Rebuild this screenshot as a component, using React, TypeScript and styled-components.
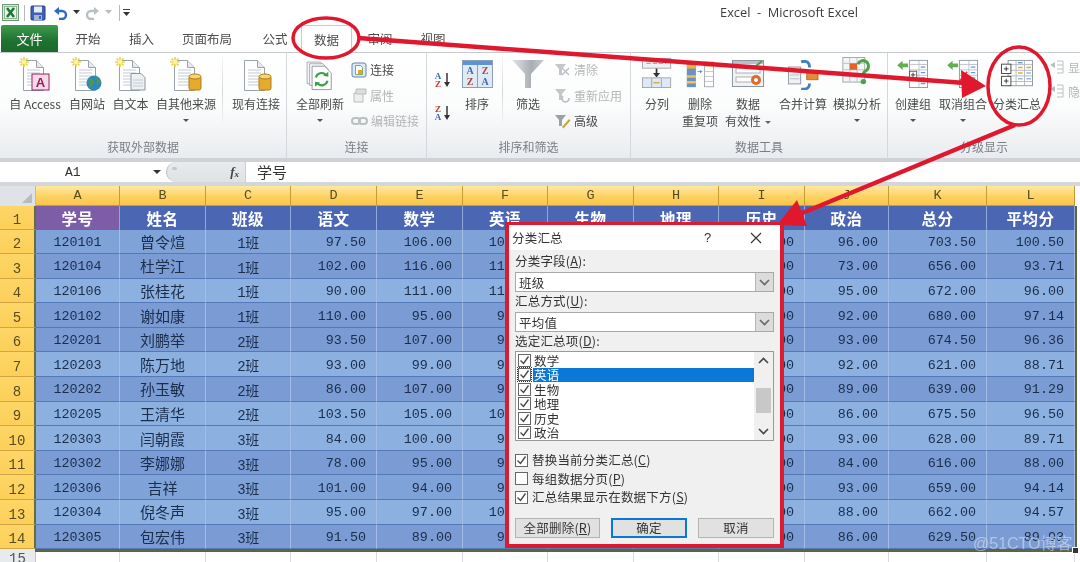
import React from 'react';
import styled, { createGlobalStyle } from 'styled-components';

const CJK = '"Noto Sans CJK SC", "Noto Sans", sans-serif';
const MONO = '"Liberation Mono", "DejaVu Sans Mono", "Noto Sans CJK SC", monospace';

const Global = createGlobalStyle`
  html, body { margin: 0; padding: 0; background: #fff; }
  #root { width: 1080px; height: 562px; overflow: hidden; }
`;

const Page = styled.div`
  position: relative; width: 1080px; height: 562px; overflow: hidden;
  background: #fff; font-family: ${CJK}; filter: blur(0.6px); color: #444;
`;

/* Title bar */
const TitleBar = styled.div`
  height: 25px; display: flex; align-items: center; padding-left: 2px; position: relative;
`;
const QuickSep = styled.span`
  width: 1px; height: 16px; background: ${p => (p.$clear ? 'transparent' : '#b5b9bd')}; margin: 0 ${p => p.$m ?? 5}px;
`;
const TitleText = styled.div`
  position: absolute; left: 690px; width: 198px; top: 3px; text-align: center;
  font: 12.8px "Open Sans", "Noto Sans", sans-serif; color: #3c3c3c; white-space: pre;
`;

/* Tabs */
const TabRow = styled.div`height: 27px; display: flex; align-items: stretch; border-bottom: 1px solid #c6cacf;`;
const FileTab = styled.div`
  width: 57px; margin-left: 1px; background: linear-gradient(#3f9a4e, #1f7130 60%, #1c6a2c);
  color: #fff; font-size: 13px; display: flex; align-items: center; justify-content: center;
  border-radius: 2px 2px 0 0;
`;
const Tab = styled.div`
  width: ${p => p.$w}px; display: flex; align-items: center; justify-content: center;
  font-size: 12.5px; color: #4c4c4c; box-sizing: border-box;
  ${p => p.$active && 'border: 1px solid #c6cacf; border-bottom: 0; background: #fff; margin-bottom: -1px;'}
`;

/* Ribbon */
const Ribbon = styled.div`
  height: 105px; display: flex; box-sizing: border-box;
  background: linear-gradient(#fff 0%, #fbfcfc 50%, #e9ecef 100%);
`;
const Group = styled.div`
  width: ${p => p.$w}px; flex: none; display: flex; flex-direction: column; overflow: hidden;
  border-right: ${p => (p.$last ? 0 : '1px solid #d4d8dc')}; box-sizing: border-box;
`;
const GroupBody = styled.div`
  flex: 1; display: flex; padding-left: ${p => p.$pl ?? 0}px; min-height: 0;
`;
const GroupLabel = styled.div`
  height: 24px; line-height: 26px; text-align: center; font-size: 12px; color: #7a7f85;
`;
const Big = styled.div`
  width: ${p => p.$w}px; flex: none; display: flex; flex-direction: column; align-items: center;
  font-size: 12px; line-height: 17px; color: #4a4a4a; white-space: nowrap;
`;
const BigIcon = styled.div`
  height: 42px; box-sizing: border-box; display: flex; align-items: flex-end; justify-content: center; width: 100%;
  padding-bottom: ${p => p.$pb ?? 2}px;
`;
const Caret = styled.span`
  display: block; width: 0; height: 0; margin-top: 7px;
  border: 3px solid transparent; border-top: 3px solid #555; border-bottom: 0;
`;
const InlineCaret = styled.span`
  display: inline-block; width: 0; height: 0; margin-left: 4px; vertical-align: 2px;
  border: 3px solid transparent; border-top: 3px solid #666; border-bottom: 0;
`;
const VSep = styled.div`
  width: 1px; flex: none; margin: 4px ${p => p.$mr ?? 2}px 8px ${p => p.$ml ?? 2}px;
  background: linear-gradient(#f4f5f6, #d5d8db, #f4f5f6);
`;
const SmallList = styled.div`
  display: flex; flex-direction: column; padding-top: ${p => p.$pt ?? 4}px; flex: none;
  margin-left: ${p => p.$ml ?? 0}px;
  ${p => p.$w && `width: ${p.$w}px;`}
`;
const Small = styled.div`
  height: ${p => p.$h ?? 25.5}px; display: flex; align-items: center; gap: 3px; font-size: 12px;
  white-space: nowrap; color: ${p => (p.$off ? '#b4b6b9' : '#4a4a4a')};
`;

/* Formula bar */
const FormulaBar = styled.div`
  height: 20px; display: flex; align-items: center; background: #fff;
  border-top: 4px solid #ced1d5; border-bottom: 4px solid #d4d7da;
`;
const NameBox = styled.div`
  width: 150px; flex: none; font: 13px ${MONO}; color: #333; padding-left: 65px; box-sizing: border-box;
`;
const NameCaret = styled.span`
  width: 0; height: 0; margin: 0 5px 0 3px; border: 4px solid transparent; border-top: 4px solid #333;
  border-bottom: 0; flex: none;
`;
const FxPill = styled.div`
  width: 79px; height: 20px; flex: none; box-sizing: border-box; position: relative;
  background: linear-gradient(#e8eaec, #dfe2e5); border-radius: 10px 0 0 10px; border-left: 1px solid #b8bcc0;
  display: flex; align-items: center; justify-content: flex-end; padding-right: 6px;
  font: italic bold 13px "Liberation Serif", serif; color: #444;
  &::before {
    content: ''; position: absolute; left: 5px; top: 5px; width: 5px; height: 3px; background: #c3c7cb; border-radius: 2px;
  }
`;
const FxSub = styled.span`font-size: 9px; margin-top: 3px;`;
const FxInput = styled.div`font-size: 15px; color: #333; padding-left: 11px; border-left: 1px solid #ccc; height: 20px; line-height: 19px;`;

/* Sheet */
const COLS = [84, 86, 85, 86, 86, 85, 86, 85, 86, 84, 98, 88];
const Sheet = styled.div`
  position: relative; display: grid;
  grid-template-columns: 36px ${COLS.map(c => c + 'px').join(' ')} 5px;
  grid-template-rows: 19.5px 24px repeat(13, 24.6px) 13px;
`;
const Corner = styled.div`
  background: #dfe2e6; border-right: 1px solid #b9bdc1; position: relative;
  &::after {
    content: ''; position: absolute; right: 3px; bottom: 3px; width: 0; height: 0;
    border-left: 10px solid transparent; border-bottom: 10px solid #b8bcc1;
  }
`;
const ColHead = styled.div`
  background: linear-gradient(#ffe9a0, #fdd264 55%, #fbc648);
  border-right: 1px solid #c79c34; border-bottom: 1px solid #c79c34;
  display: flex; align-items: center; justify-content: center;
  font: 13.5px ${MONO}; color: #5a4c1e;
`;
const RowHead = styled.div`
  background: linear-gradient(#fdd667, #fccf58); border-bottom: 1px solid #d2a643;
  border-right: 2px solid #6b6a3c; display: flex; align-items: flex-end; justify-content: center;
  font: 14px ${MONO}; color: #5a4c1e; padding-bottom: 1px; box-sizing: border-box;
`;
const PlainHead = styled(RowHead)`
  background: #e8eaed; border-right: 1px solid #c4c7ca; color: #555; border-bottom: 0; padding: 2px 0 0; align-items: flex-start;
`;
const HeadCell = styled.div`
  background: ${p => (p.$first ? '#7c5da6' : '#4b67b3')}; color: #fff; font-weight: 700; font-size: 15.5px;
  display: flex; align-items: center; justify-content: center;
  border-right: 1px solid #8ea8da; letter-spacing: 0.5px;
`;
const Cell = styled.div`
  background: ${p => (p.$light ? '#8cb1e1' : p.$mid ? '#7fa2d8' : '#7a9bd4')};
  border-right: 1px solid #a3bde6; border-bottom: 1px solid #5478b8;
  display: flex; align-items: center; box-sizing: border-box; color: #1c2d4a; white-space: nowrap;
  justify-content: ${p => (p.$num ? 'flex-end' : 'center')};
  padding-right: ${p => (p.$num ? 10 : 0)}px;
  padding-top: ${p => (p.$cjk ? 0 : 2)}px;
  font: ${p => (p.$cjk ? `15px ${CJK}` : `13.4px ${MONO}`)};
`;
const ClassCell = styled.span`font: 14px ${MONO}; letter-spacing: -0.5px;`;
const EndGap = styled.div`background: #fff;`;
const BlankCell = styled.div`background: #fff; border-right: 1px solid #d8dadd;`;
const Selection = styled.div`
  position: absolute; left: 35px; top: 19.5px; width: 1040px; height: 343.8px;
  border-right: 2px solid #5f6440; border-bottom: 3px solid #5f6440; pointer-events: none;
`;
const Handle = styled.div`
  position: absolute; right: -4px; bottom: -5px; width: 5px; height: 5px; background: #333; border: 1px solid #fff;
`;
const Watermark = styled.div`
  position: absolute; left: 973px; top: 530px; font: 16px "Liberation Sans", ${CJK}; color: rgba(225,230,240,.55); white-space: nowrap;
`;

/* Dialog */
const Dialog = styled.div`
  position: absolute; left: 505px; top: 222px; width: 279px; height: 326px; box-sizing: border-box;
  border: 4px solid #e01a2e; border-top-width: 3px; background: #f0f0f0; display: flex; flex-direction: column;
  font-size: 12.5px; color: #333; letter-spacing: 0.2px;
`;
const DlgTitle = styled.div`
  height: 25px; flex: none; background: #fff; display: flex; align-items: center; padding-left: 3px; position: relative; font-size: 12.5px;
`;
const Help = styled.span`position: absolute; left: 195px; font: 13px "Liberation Sans", sans-serif;`;
const Close = styled.svg`position: absolute; left: 241px; top: 7px;`;
const DlgBody = styled.div`flex: 1; padding: 2px 6px 0; display: flex; flex-direction: column;`;
const DlgLabel = styled.div`height: ${p => p.$h ?? 20}px; line-height: ${p => (p.$h ?? 20) - 2}px; flex: none;`;
const SelectBox = styled.div`
  height: 20px; flex: none; box-sizing: border-box; background: #fff; border: 1px solid #a9a9a9;
  display: flex; align-items: center; padding-left: 3px; justify-content: space-between;
`;
const SelectBtn = styled.div`
  width: 17px; height: 18px; background: #dcdcdc; border-left: 1px solid #b8b8b8; display: flex; align-items: center; justify-content: center;
`;
const ListBox = styled.div`
  height: 90px; flex: none; box-sizing: border-box; border: 1px solid #9a9a9a; background: #fff; display: flex;
`;
const ListItems = styled.div`flex: 1; padding: 1px 0 0 2px; min-width: 0;`;
const ListRow = styled.div`height: 14.5px; display: flex; align-items: center; gap: 2px; line-height: 14px;`;
const ItemText = styled.span`
  flex: 1; padding-left: 1px; height: 13.5px; line-height: 13px;
  ${p => p.$sel && 'background: #0a78d6; color: #fff;'}
`;
const Box = styled.span`
  width: 13px; height: 13px; flex: none; box-sizing: border-box; border: 1px solid #666; background: #fff;
  display: inline-flex; align-items: center; justify-content: center;
  ${p => p.$focus && 'outline: 1px dotted #333; outline-offset: 0;'}
`;
const ScrollBar = styled.div`
  width: 19px; flex: none; background: #f0f0f0; display: flex; flex-direction: column; align-items: center;
`;
const ScrollBtn = styled.div`height: 17px; flex: none; display: flex; align-items: center; justify-content: center;`;
const ScrollTrack = styled.div`flex: 1; width: 100%; padding-top: 19px; box-sizing: border-box;`;
const Thumb = styled.div`height: 25px; width: 15px; margin: 0 auto; background: #c8c8c8;`;
const Checks = styled.div`margin-top: 10px; flex: none;`;
const CheckRow = styled.div`height: 18.5px; display: flex; align-items: center; gap: 4px; line-height: 16px;`;
const Buttons = styled.div`margin-top: 11.5px; display: flex; justify-content: space-between;`;
const Btn = styled.div`
  width: ${p => p.$w}px; height: 20px; box-sizing: border-box; background: #e1e1e1;
  border: ${p => (p.$primary ? '2px solid #0a78d6' : '1px solid #b4b4b4')};
  text-align: center; line-height: ${p => (p.$primary ? 15 : 17)}px; font-size: 12.5px;
`;

const Overlay = styled.svg`position: absolute; left: 0; top: 0; pointer-events: none;`;

/* Icons */
const XLogo = () => (
  <svg width="17" height="17" viewBox="0 0 17 17"><rect x=".5" y=".5" width="16" height="16" fill="#d9eadb" stroke="#6e9a76" /><rect x="2.5" y="2.5" width="12" height="12" fill="#e9f3ea" stroke="#8fb596" /><path d="M5 4l7 9M12 4l-7 9" stroke="#1d7a35" strokeWidth="2.6" /></svg>
);
const SaveIc = () => (
  <svg width="16" height="16" viewBox="0 0 16 16"><rect x="1" y="1" width="14" height="14" rx="1" fill="#3f61b5" stroke="#27408a" /><rect x="4" y="1.5" width="8" height="6" fill="#e6ecf6" /><rect x="4" y="10" width="8" height="5" fill="#a6b6d8" /><rect x="9" y="11" width="2" height="3" fill="#3f61b5" /></svg>
);
const Undo = ({ c = '#2f68c4' }: { c?: string }) => (
  <svg width="15" height="14" viewBox="0 0 15 14"><path d="M3 5h6a3.6 3.6 0 0 1 0 8H6" fill="none" stroke={c} strokeWidth="2.4" /><path d="M1 5l5-4v8z" fill={c} /></svg>
);
const Redo = () => (
  <svg width="15" height="14" viewBox="0 0 15 14"><path d="M12 5H6a3.6 3.6 0 0 0 0 8h3" fill="none" stroke="#b8c0c4" strokeWidth="2.4" /><path d="M14 5L9 1v8z" fill="#b8c0c4" /></svg>
);
const TinyCaret = ({ c = '#333', m = 5 }: { c?: string; m?: number }) => (
  <svg width="7" height="5" viewBox="0 0 7 5" style={{ margin: `0 ${m}px` }}><path d="M0 0h7L3.5 4z" fill={c} /></svg>
);
const Customize = () => (
  <svg width="9" height="10" viewBox="0 0 9 10"><path d="M1 1.5h7" stroke="#444" /><path d="M1 4h7L4.5 8z" fill="#333" /></svg>
);
const Star = ({ x = 0, y = 0 }: { x?: number; y?: number }) => (
  <g transform={`translate(${x} ${y})`} stroke="#e9d44a" strokeWidth="1.6"><path d="M5 0v10M0 5h10M1.5 1.5l7 7M8.5 1.5l-7 7" /><circle cx="5" cy="5" r="2.2" fill="#fff4a0" stroke="none" /></g>
);
const Page3 = () => (
  <g>
    <path d="M6.5 3.5h13l7 7v23h-20z" fill="#fff" stroke="#9aa3ab" />
    <path d="M19.5 3.5v7h7" fill="#e7ebef" stroke="#9aa3ab" />
    <path d="M10 13h13M10 16h13M10 19h13M10 22h13M10 25h13M10 28h13" stroke="#c3cbd3" />
  </g>
);
const DocIc = ({ kind }: { kind: 'access' | 'globe' | 'text' | 'db' | 'plain' }) => (
  <svg width="36" height="36" viewBox="0 0 36 36">
    <Page3 />
    {kind !== 'plain' && <Star x={2} y={0} />}
    {kind === 'access' && (<g><rect x="15" y="17" width="17" height="16" fill="#f4dbe8" stroke="#a01f5e" /><text x="23.5" y="30" textAnchor="middle" fontFamily="Liberation Sans" fontWeight="700" fontSize="13" fill="#a3165b">A</text></g>)}
    {kind === 'globe' && (<g><circle cx="25" cy="26" r="7.5" fill="#2e86c1" /><path d="M20 22c3-2 6 1 5 4s-4 3-4 6M27 20c2 2 5 3 4 6l-3 3z" fill="#4c9a48" /></g>)}
    {kind === 'text' && (<g><path d="M18 16.5h10l4 4v12.500H18z" fill="#eef1f4" stroke="#8c969f" /><path d="M20 23h10M20 26h10M20 29h10" stroke="#c3cbd3" /></g>)}
    {(kind === 'db' || kind === 'plain') && (<g><rect x="21" y="19" width="12" height="14" rx="2" fill="#e6ab2e" stroke="#b07d14" /><ellipse cx="27" cy="19.500" rx="6" ry="2.500" fill="#f6d67c" stroke="#b07d14" /></g>)}
  </svg>
);
const RefreshIc = () => (
  <svg width="30" height="32" viewBox="0 0 36 38">
    <path d="M2.500 3.500h16l6 6v20h-22z" fill="#f4f6f8" stroke="#9aa3ab" />
    <path d="M5.500 5.500h16l6 6v20h-22z" fill="#f8f9fa" stroke="#9aa3ab" />
    <path d="M8.500 8.500h15l8 8v20h-23z" fill="#fff" stroke="#7f8a94" />
    <path d="M13 22a7 7 0 0 1 12-3M27 26a7 7 0 0 1-12 3" fill="none" stroke="#37a046" strokeWidth="2.600" />
    <path d="M22 20l6 1v-6zM18 28l-6-1v6z" fill="#37a046" />
  </svg>
);
const ConnIc = () => (
  <svg width="16" height="16" viewBox="0 0 16 16"><rect x="1" y="1" width="14" height="14" rx="2" fill="#dce9f7" stroke="#5e86b8" /><path d="M4.500 3.500h5l2 2v7h-7z" fill="#fff" stroke="#8a5" /><rect x="7" y="8" width="4" height="4" fill="#d9a62e" /></svg>
);
const PropIc = () => (
  <svg width="16" height="16" viewBox="0 0 16 16"><path d="M3 6h9v9H3z" fill="#eee" stroke="#b8bcc0" /><path d="M5 2h10v5H5z" fill="#ddd" stroke="#b8bcc0" /></svg>
);
const LinkIc = () => (
  <svg width="17" height="16" viewBox="0 0 17 16"><rect x="1" y="5" width="8" height="6" rx="3" fill="none" stroke="#bcbfc2" strokeWidth="2" /><rect x="8" y="5" width="8" height="6" rx="3" fill="none" stroke="#bcbfc2" strokeWidth="2" /></svg>
);
const SortTiny = ({ flip }: { flip?: boolean }) => (
  <svg width="20" height="18" viewBox="0 0 20 18">
    <text x="6" y="8" textAnchor="middle" fontFamily="Liberation Serif" fontWeight="700" fontSize="9" fill={flip ? '#c0392b' : '#3a6db5'}>{flip ? 'Z' : 'A'}</text>
    <text x="6" y="16" textAnchor="middle" fontFamily="Liberation Serif" fontWeight="700" fontSize="9" fill={flip ? '#3a6db5' : '#c0392b'}>{flip ? 'A' : 'Z'}</text>
    <path d="M15 2v11" stroke="#333" strokeWidth="1.500" /><path d="M12 11h6l-3 5z" fill="#333" />
  </svg>
);
const SortBig = () => (
  <svg width="31" height="28" viewBox="0 0 31 28">
    <rect x=".5" y=".5" width="30" height="27" fill="#dfeaf6" stroke="#8aa0b8" /><rect x="1" y="1" width="29" height="4" fill="#5b93d3" /><path d="M15.500 5v22" stroke="#8aa0b8" />
    <g fontFamily="Liberation Serif" fontWeight="700" fontSize="10">
      <text x="8" y="14" textAnchor="middle" fill="#3a6db5">A</text><text x="8" y="25" textAnchor="middle" fill="#a8453c">Z</text>
      <text x="23" y="14" textAnchor="middle" fill="#a8453c">Z</text><text x="23" y="25" textAnchor="middle" fill="#3a6db5">A</text>
    </g>
  </svg>
);
const Funnel = () => (
  <svg width="32" height="28" viewBox="0 0 32 28"><defs><linearGradient id="fn" x1="0" x2="1"><stop offset="0" stopColor="#e3e5e8" /><stop offset=".6" stopColor="#a9aeb4" /><stop offset="1" stopColor="#c6cace" /></linearGradient></defs><path d="M0 0h32L19 14v14h-6V14z" fill="url(#fn)" /></svg>
);
const ClearIc = ({ adv, re }: { adv?: boolean; re?: boolean }) => (
  <svg width="17" height="16" viewBox="0 0 17 16">
    <path d="M1 2h11L8 7v6H5V7z" fill={adv ? '#9aa2a8' : '#c4c7ca'} />
    {adv && <path d="M8 14l7-8 1.500 1.500-7 8z" fill="#c9a63a" />}
    {re && <path d="M9 9a3.500 3.500 0 1 0 6 2" fill="none" stroke="#bcc2c6" strokeWidth="1.800" />}
    {!adv && !re && <path d="M8 6l7 7M15 6l-7 7" stroke="#bcc2c6" strokeWidth="1.600" />}
  </svg>
);
const SplitIc = () => (
  <svg width="32" height="30" viewBox="0 0 34 34">
    <rect x=".5" y=".5" width="32" height="11" fill="#eef2f7" stroke="#9aa3ab" /><path d="M5 6h22" stroke="#d5a83a" strokeWidth="1.500" strokeDasharray="5 2" />
    <path d="M16.500 12v7" stroke="#333" strokeWidth="2" /><path d="M12.500 17h8l-4 5z" fill="#333" />
    <rect x=".5" y="22.500" width="32" height="11" fill="#dfe9f4" stroke="#9aa3ab" /><path d="M11 23v10M22 23v10" stroke="#9aa3ab" /><path d="M13 28h7" stroke="#d5a83a" strokeWidth="1.500" />
  </svg>
);
const DedupIc = () => (
  <svg width="32" height="28" viewBox="0 0 34 34">
    <rect x="1" y="2" width="11" height="31" fill="#6b8fc7" /><path d="M1 8h11" stroke="#e3b436" strokeWidth="5" /><path d="M1 20h11M1 27h11" stroke="#f0c548" strokeWidth="3" />
    <path d="M14 14h4" stroke="#5a8ac5" /><path d="M17 12l3 2-3 2z" fill="#5a8ac5" />
    <rect x="22.500" y="2.500" width="11" height="30" fill="#fff" stroke="#9aa3ab" /><rect x="23" y="3" width="10" height="5" fill="#efc64d" /><path d="M23 14h10M23 20h10M23 26h10" stroke="#b9c0c7" />
  </svg>
);
const ValidIc = () => (
  <svg width="32" height="28" viewBox="0 0 32 28">
    <rect x=".5" y=".5" width="31" height="26" fill="#f0f2f4" stroke="#8c969f" /><rect x="1" y="1" width="30" height="3" fill="#b9c0c7" />
    <rect x="4" y="8" width="24" height="5" fill="#fff" stroke="#aab1b8" /><rect x="4" y="17" width="20" height="5" fill="#fff" stroke="#aab1b8" />
    <circle cx="24" cy="20" r="5" fill="#de6a2a" /><circle cx="24" cy="20" r="2" fill="#fff" /><path d="M24 6l6-5" stroke="#4ea14c" strokeWidth="2" />
  </svg>
);
const MergeIc = () => (
  <svg width="32" height="30" viewBox="0 0 34 32">
    <rect x="1.500" y="7.500" width="13" height="18" fill="#eef1f4" stroke="#8c969f" /><path d="M3 12h10M3 16h10M3 20h10" stroke="#b9c0c7" />
    <rect x="21" y="12" width="12" height="9" fill="#e58a3a" stroke="#c46b20" />
    <path d="M15 2c6-2 9 1 9 6" fill="none" stroke="#3f7fc4" strokeWidth="3" /><path d="M15 31c6 1 9-2 9-6" fill="none" stroke="#3f7fc4" strokeWidth="3" />
  </svg>
);
const WhatIfIc = () => (
  <svg width="30" height="31" viewBox="0 0 32 34">
    <rect x=".5" y=".5" width="24" height="27" fill="#f4f5f7" stroke="#9aa3ab" /><path d="M8 1v26M16 1v26M1 7h23M1 14h23M1 21h23" stroke="#b9c0c7" />
    <rect x="8" y="7" width="8" height="7" fill="#e0632e" />
    <path d="M17 8a6 6 0 1 1 9 7c-2 1-3 2-3 4" fill="none" stroke="#4ea14c" strokeWidth="3.400" /><circle cx="23" cy="27" r="3" fill="#4ea14c" />
  </svg>
);
const OutlineBase = () => (
  <g>
    <rect x="13.500" y="1.500" width="20" height="30" fill="#fff" stroke="#8c969f" /><path d="M14 6h19M14 12h19M14 18h19M14 24h19M24 2v29" stroke="#b9c0c7" />
    <path d="M26 9h5M26 15h5M26 21h5M26 27h5" stroke="#6b9ad0" strokeWidth="1.500" />
  </g>
);
const GroupIc = ({ cancel }: { cancel?: boolean }) => (
  <svg width="33" height="29" viewBox="0 0 36 32">
    <OutlineBase />
    <path d="M0 7l6-5v3h6v4H6v3z" fill="#5fb04e" />
    {cancel
      ? <path d="M11 28l11-14" stroke="#d9423a" strokeWidth="2" />
      : <g><rect x="13.500" y="13.500" width="8" height="8" fill="#fff" stroke="#555" /><path d="M15 17.500h5M17.500 15v5" stroke="#333" /></g>}
  </svg>
);
const SubtotalIc = () => (
  <svg width="36" height="30" viewBox="0 0 36 32">
    <rect x="8.500" y="1.500" width="26" height="27" fill="#fff" stroke="#8c969f" /><path d="M9 6h25M9 12h25M9 18h25M9 24h25M17 2v26M26 2v26" stroke="#b0b7be" />
    <path d="M19 4h5" stroke="#6b9ad0" strokeWidth="1.500" /><path d="M19 9h5M28 9h5M19 15h5" stroke="#d8b23c" strokeWidth="1.500" /><path d="M28 15h5M19 21h5M28 21h5" stroke="#9fb7d6" strokeWidth="1.500" />
    <g fill="#fff" stroke="#444"><rect x="1.500" y="5.500" width="10" height="10" /><rect x="1.500" y="18.500" width="10" height="10" /></g>
    <path d="M4 10.500h5M6.500 8v5M4 23.500h5M6.500 21v5" stroke="#333" />
  </svg>
);
const ShowIc = () => (
  <svg width="16" height="14" viewBox="0 0 16 14"><path d="M1 5l5-3v6z" fill="#b9bdc1" /><path d="M8 1h6M8 5h6M8 9h6M8 13h6M14 1v12" stroke="#bcc0c4" /></svg>
);
const Chevron = ({ up, c = '#555' }: { up?: boolean; c?: string }) => (
  <svg width="11" height="7" viewBox="0 0 11 7"><path d={up ? 'M1 6l4.500-4.500L10 6' : 'M1 1l4.500 4.500L10 1'} fill="none" stroke={c} strokeWidth="1.600" /></svg>
);
const Check = () => (
  <svg width="11" height="11" viewBox="0 0 11 11"><path d="M1.500 5.500l3 3 5-7" fill="none" stroke="#444" strokeWidth="1.300" /></svg>
);

/* Data */
const ROWS = [
  ['120101', '曾令煊', '1班', '97.50', '106.00', '108.00', '98.00', '99.00', '99.00', '96.00', '703.50', '100.50'],
  ['120104', '杜学江', '1班', '102.00', '116.00', '113.00', '78.00', '88.00', '86.00', '73.00', '656.00', '93.71'],
  ['120106', '张桂花', '1班', '90.00', '111.00', '116.00', '72.00', '95.00', '93.00', '95.00', '672.00', '96.00'],
  ['120102', '谢如康', '1班', '110.00', '95.00', '98.00', '99.00', '93.00', '93.00', '92.00', '680.00', '97.14'],
  ['120201', '刘鹏举', '2班', '93.50', '107.00', '96.00', '100.00', '93.00', '92.00', '93.00', '674.50', '96.36'],
  ['120203', '陈万地', '2班', '93.00', '99.00', '92.00', '86.00', '86.00', '73.00', '92.00', '621.00', '88.71'],
  ['120202', '孙玉敏', '2班', '86.00', '107.00', '92.00', '89.00', '86.00', '86.00', '89.00', '639.00', '91.29'],
  ['120205', '王清华', '2班', '103.50', '105.00', '105.00', '93.00', '93.00', '90.00', '86.00', '675.50', '96.50'],
  ['120303', '闫朝霞', '3班', '84.00', '100.00', '97.00', '87.00', '78.00', '89.00', '93.00', '628.00', '89.71'],
  ['120302', '李娜娜', '3班', '78.00', '95.00', '94.00', '82.00', '90.00', '93.00', '84.00', '616.00', '88.00'],
  ['120306', '吉祥', '3班', '101.00', '94.00', '99.00', '90.00', '87.00', '95.00', '93.00', '659.00', '94.14'],
  ['120304', '倪冬声', '3班', '95.00', '97.00', '102.00', '93.00', '95.00', '92.00', '88.00', '662.00', '94.57'],
  ['120305', '包宏伟', '3班', '91.50', '89.00', '94.00', '92.00', '91.00', '86.00', '86.00', '629.50', '89.93'],
];
const HEADS = ['学号', '姓名', '班级', '语文', '数学', '英语', '生物', '地理', '历史', '政治', '总分', '平均分'];
const LETTERS = 'ABCDEFGHIJKL'.split('');
const LIGHT = [2, 5, 7, 8, 11];
const MID = [0, 10];
const SUBJECTS = ['数学', '英语', '生物', '地理', '历史', '政治'];

const BigBtn = ({ w, icon, lines, caret, pb }: { w: number; icon: React.ReactNode; lines: React.ReactNode[]; caret?: boolean; pb?: number }) => (
  <Big $w={w}>
    <BigIcon $pb={pb}>{icon}</BigIcon>
    {lines.map((l, i) => <div key={i}>{l}</div>)}
    {caret && <Caret />}
  </Big>
);

export default function App() {
  return (
    <Page>
      <Global />
      <TitleBar>
        <XLogo />
        <QuickSep $m={5} />
        <SaveIc />
        <QuickSep $m={3} $clear />
        <Undo />
        <TinyCaret />
        <Redo />
        <TinyCaret c="#b8bcc0" />
        <QuickSep $m={2} />
        <Customize />
        <TitleText>Excel  -  Microsoft Excel</TitleText>
      </TitleBar>
      <TabRow>
        <FileTab>文件</FileTab>
        <Tab $w={60}>开始</Tab>
        <Tab $w={47}>插入</Tab>
        <Tab $w={84}>页面布局</Tab>
        <Tab $w={52}>公式</Tab>
        <Tab $w={51} $active>数据</Tab>
        <Tab $w={56}>审阅</Tab>
        <Tab $w={50}>视图</Tab>
      </TabRow>
      <Ribbon>
        <Group $w={287}>
          <GroupBody $pl={5}>
            <BigBtn w={60} icon={<DocIc kind="access" />} lines={['自 Access']} />
            <BigBtn w={44} icon={<DocIc kind="globe" />} lines={['自网站']} />
            <BigBtn w={43} icon={<DocIc kind="text" />} lines={['自文本']} />
            <BigBtn w={68} icon={<DocIc kind="db" />} lines={['自其他来源']} caret />
            <VSep $ml={2} $mr={3} />
            <BigBtn w={60} icon={<DocIc kind="plain" />} lines={['现有连接']} />
          </GroupBody>
          <GroupLabel>获取外部数据</GroupLabel>
        </Group>
        <Group $w={140}>
          <GroupBody $pl={2}>
            <BigBtn w={62} pb={4} icon={<RefreshIc />} lines={['全部刷新']} caret />
            <SmallList>
              <Small><ConnIc />连接</Small>
              <Small $off><PropIc />属性</Small>
              <Small $off><LinkIc />编辑链接</Small>
            </SmallList>
          </GroupBody>
          <GroupLabel>连接</GroupLabel>
        </Group>
        <Group $w={204}>
          <GroupBody $pl={5}>
            <SmallList $pt={10} $w={25}>
              <Small $h={33}><SortTiny /></Small>
              <Small $h={33}><SortTiny flip /></Small>
            </SmallList>
            <BigBtn w={40} pb={7} icon={<SortBig />} lines={['排序']} />
            <VSep $ml={5} $mr={9} />
            <BigBtn w={32} pb={7} icon={<Funnel />} lines={['筛选']} />
            <SmallList $w={80} $ml={10}>
              <Small $off><ClearIc />清除</Small>
              <Small $off><ClearIc re />重新应用</Small>
              <Small><ClearIc adv />高级</Small>
            </SmallList>
          </GroupBody>
          <GroupLabel>排序和筛选</GroupLabel>
        </Group>
        <Group $w={257}>
          <GroupBody $pl={4}>
            <BigBtn w={44} pb={7} icon={<SplitIc />} lines={['分列']} />
            <BigBtn w={42} pb={7} icon={<DedupIc />} lines={['删除', '重复项']} />
            <BigBtn w={54} pb={7} icon={<ValidIc />} lines={['数据', <>有效性<InlineCaret /></>]} />
            <BigBtn w={56} pb={5} icon={<MergeIc />} lines={['合并计算']} />
            <BigBtn w={52} pb={7} icon={<WhatIfIc />} lines={['模拟分析']} caret />
          </GroupBody>
          <GroupLabel>数据工具</GroupLabel>
        </Group>
        <Group $w={192} $last>
          <GroupBody>
            <BigBtn w={50} pb={7} icon={<GroupIc />} lines={['创建组']} caret />
            <BigBtn w={50} pb={7} icon={<GroupIc cancel />} lines={['取消组合']} caret />
            <BigBtn w={58} pb={6} icon={<SubtotalIc />} lines={['分类汇总']} />
            <SmallList $pt={2} $ml={3}>
              <Small $off $h={24}><ShowIc />显示明细数据</Small>
              <Small $off $h={24}><ShowIc />隐藏明细数据</Small>
            </SmallList>
          </GroupBody>
          <GroupLabel>分级显示</GroupLabel>
        </Group>
      </Ribbon>
      <FormulaBar>
        <NameBox>A1</NameBox>
        <NameCaret />
        <FxPill>f<FxSub>x</FxSub></FxPill>
        <FxInput>学号</FxInput>
      </FormulaBar>
      <Sheet>
        <Corner />
        {LETTERS.map(l => <ColHead key={l}>{l}</ColHead>)}
        <EndGap />
        <RowHead>1</RowHead>
        {HEADS.map((h, i) => <HeadCell key={h} $first={i === 0}>{h}</HeadCell>)}
        <EndGap />
        {ROWS.map((r, ri) => (
          <React.Fragment key={r[0]}>
            <RowHead>{ri + 2}</RowHead>
            {r.map((v, ci) => (
              <Cell key={ci} $light={LIGHT.includes(ri)} $mid={MID.includes(ri)} $num={ci > 2} $cjk={ci === 1}>
                {ci === 2 ? <ClassCell>{v}</ClassCell> : v}
              </Cell>
            ))}
            <EndGap />
          </React.Fragment>
        ))}
        <PlainHead>15</PlainHead>
        {LETTERS.map(l => <BlankCell key={l} />)}
        <EndGap />
        <Selection><Handle /></Selection>
      </Sheet>
      <Watermark>@51CTO博客</Watermark>
      <Dialog>
        <DlgTitle>
          分类汇总
          <Help>?</Help>
          <Close width="12" height="12" viewBox="0 0 12 12"><path d="M1 1l10 10M11 1L1 11" stroke="#333" strokeWidth="1.100" /></Close>
        </DlgTitle>
        <DlgBody>
          <DlgLabel>分类字段(<u>A</u>):</DlgLabel>
          <SelectBox><span>班级</span><SelectBtn><Chevron c="#666" /></SelectBtn></SelectBox>
          <DlgLabel>汇总方式(<u>U</u>):</DlgLabel>
          <SelectBox><span>平均值</span><SelectBtn><Chevron c="#666" /></SelectBtn></SelectBox>
          <DlgLabel $h={19}>选定汇总项(<u>D</u>):</DlgLabel>
          <ListBox>
            <ListItems>
              {SUBJECTS.map((s, i) => (
                <ListRow key={s}>
                  <Box $focus={i === 1}><Check /></Box>
                  <ItemText $sel={i === 1}>{s}</ItemText>
                </ListRow>
              ))}
            </ListItems>
            <ScrollBar>
              <ScrollBtn><Chevron up c="#444" /></ScrollBtn>
              <ScrollTrack><Thumb /></ScrollTrack>
              <ScrollBtn><Chevron c="#444" /></ScrollBtn>
            </ScrollBar>
          </ListBox>
          <Checks>
            <CheckRow><Box><Check /></Box><span>替换当前分类汇总(<u>C</u>)</span></CheckRow>
            <CheckRow><Box /><span>每组数据分页(<u>P</u>)</span></CheckRow>
            <CheckRow><Box><Check /></Box><span>汇总结果显示在数据下方(<u>S</u>)</span></CheckRow>
          </Checks>
          <Buttons>
            <Btn $w={85}>全部删除(<u>R</u>)</Btn>
            <Btn $w={76} $primary>确定</Btn>
            <Btn $w={76}>取消</Btn>
          </Buttons>
        </DlgBody>
      </Dialog>
      <Overlay width="1080" height="562" viewBox="0 0 1080 562">
        <g fill="none" stroke="#e0182d" strokeWidth="3.500">
          <ellipse cx="326" cy="38" rx="33" ry="20" />
          <ellipse cx="1019" cy="86" rx="31" ry="39" />
        </g>
        <path d="M358 38L965 83" stroke="#e0182d" strokeWidth="4.500" />
        <path d="M961 70L986 86L962 98z" fill="#e0182d" />
        <path d="M1015 125L795 216" stroke="#e0182d" strokeWidth="4.500" />
        <path d="M777 225L797 200L807 226z" fill="#e0182d" />
      </Overlay>
    </Page>
  );
}
